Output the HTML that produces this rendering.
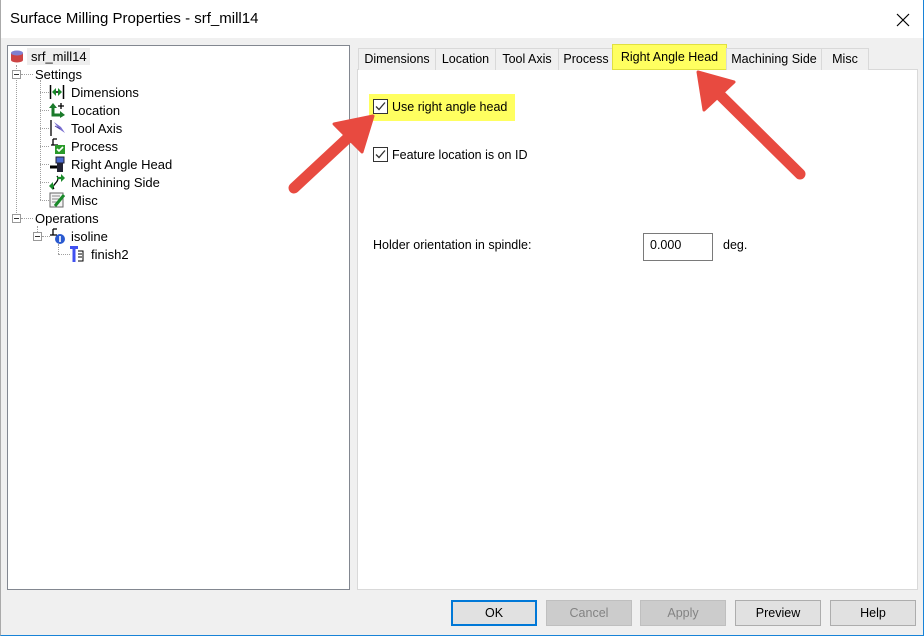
<!DOCTYPE html>
<html><head><meta charset="utf-8"><style>
*{margin:0;padding:0;box-sizing:border-box}
body{width:924px;height:636px;background:#f0f0f0;font-family:"Liberation Sans",Arial,sans-serif;font-size:12.5px;color:#000;position:relative;overflow:hidden}
.abs{position:absolute}
#win{left:0;top:0;width:924px;height:636px;border:1px solid #1883d7;border-top:none;border-left:1px solid #aaa}
#title{left:0;top:0;width:923px;height:38px;background:#fff}
#title span{position:absolute;left:10px;top:10px;font-size:15px}
#tree{left:7px;top:45px;width:343px;height:545px;background:#fff;border:1px solid #828790}
.ti{position:absolute;font-size:13px;white-space:nowrap}
#panel{left:357px;top:69px;width:561px;height:521px;background:#fff;border:1px solid #d9d9d9}
.tab{position:absolute;top:48px;height:22px;border:1px solid #d9d9d9;border-bottom:none;background:#f0f0f0;font-size:12.5px;padding:3px 0 0;text-align:center}
.btn{position:absolute;top:600px;height:26px;border:1px solid #adadad;background:#e1e1e1;text-align:center;padding-top:5px;font-size:12.5px}
.cb{position:absolute;width:15px;height:15px;border:1px solid #333;background:#fff}
.dot{position:absolute;border-color:#a0a0a0;border-style:dotted;border-width:0}
.ex{position:absolute;width:9px;height:9px;border:1px solid #999;background:#fff}
.ex::after{content:"";position:absolute;left:1px;top:3px;width:5px;height:1px;background:#333}
</style></head><body>
<div id="title" class="abs"><span>Surface Milling Properties - srf_mill14</span>
<svg class="abs" style="left:896px;top:13px" width="14" height="14"><path d="M1 1L13 13M13 1L1 13" stroke="#000" stroke-width="1.2"/></svg></div>

<div id="tree" class="abs">
<div class="abs" style="left:19px;top:2px;width:63px;height:17px;background:#eee"></div>
<svg class="abs" style="left:2px;top:3px" width="14" height="14"><rect x="1" y="4" width="12" height="7" fill="#c44"/><ellipse cx="7" cy="11" rx="6" ry="2.5" fill="#c44"/><ellipse cx="7" cy="4" rx="6" ry="2.5" fill="#8080d0"/></svg>
<div class="ti" style="left:23px;top:3px">srf_mill14</div>
<div class="dot" style="left:8px;top:19px;height:154px;border-left-width:1px"></div>
<div class="ex" style="left:4px;top:24px"></div>
<div class="dot" style="left:13px;top:28px;width:12px;border-top-width:1px"></div>
<div class="ti" style="left:27px;top:21px">Settings</div>
<div class="dot" style="left:32px;top:34px;height:120px;border-left-width:1px"></div>
<div class="dot" style="left:32px;top:46px;width:9px;border-top-width:1px"></div>
<div class="dot" style="left:32px;top:64px;width:9px;border-top-width:1px"></div>
<div class="dot" style="left:32px;top:82px;width:9px;border-top-width:1px"></div>
<div class="dot" style="left:32px;top:100px;width:9px;border-top-width:1px"></div>
<div class="dot" style="left:32px;top:118px;width:9px;border-top-width:1px"></div>
<div class="dot" style="left:32px;top:136px;width:9px;border-top-width:1px"></div>
<div class="dot" style="left:32px;top:154px;width:9px;border-top-width:1px"></div>
<svg class="abs" style="left:41px;top:38px" width="16" height="16"><path d="M1.5 1v14M14.5 1v14M4 8h8" stroke="#000" stroke-width="1.5" fill="none"/><path d="M3 8l4-4v8zM13 8l-4-4v8z" fill="#1a8a2a"/></svg>
<div class="ti" style="left:63px;top:39px">Dimensions</div>
<svg class="abs" style="left:41px;top:56px" width="16" height="16"><path d="M4 5v8h8" stroke="#1a7a2a" stroke-width="3" fill="none"/><path d="M0 6l4-5 4 5zM11 9l5 4-5 3z" fill="#1a7a2a"/><path d="M12 1v6M9 4h6" stroke="#000" stroke-width="1.3"/></svg>
<div class="ti" style="left:63px;top:57px">Location</div>
<svg class="abs" style="left:41px;top:74px" width="16" height="16"><path d="M2 0v16" stroke="#000" stroke-width="1.3"/><path d="M5 2l7 5 4 6-6-4z" fill="#7a6fd0"/><path d="M6 6l5 3" stroke="#4a3fa0"/></svg>
<div class="ti" style="left:63px;top:75px">Tool Axis</div>
<svg class="abs" style="left:41px;top:92px" width="16" height="16"><path d="M4 1h4M4 1v6M2 7h7" stroke="#000" stroke-width="1.3" fill="none"/><rect x="6" y="7" width="10" height="9" fill="#2a9a2a"/><path d="M8 11l2 2 4-4" stroke="#fff" stroke-width="1.6" fill="none"/></svg>
<div class="ti" style="left:63px;top:93px">Process</div>
<svg class="abs" style="left:41px;top:110px" width="16" height="16"><rect x="7" y="1" width="8" height="6" fill="#4a6ad0" stroke="#223"/><rect x="8" y="7" width="6" height="9" fill="#223"/><path d="M1 11h7" stroke="#000" stroke-width="3"/></svg>
<div class="ti" style="left:63px;top:111px">Right Angle Head</div>
<svg class="abs" style="left:41px;top:128px" width="16" height="16"><path d="M5 15c-4-4 7-7 3-13" stroke="#000" stroke-width="1.3" fill="none"/><path d="M8 4h5M5 12h-3" stroke="#1a8a2a" stroke-width="2.2"/><path d="M12 0l4 4-4 4zM4 8l-4 4 4 4z" fill="#1a8a2a"/></svg>
<div class="ti" style="left:63px;top:129px">Machining Side</div>
<svg class="abs" style="left:41px;top:146px" width="16" height="16"><rect x="1" y="1" width="13" height="14" fill="#f4f4f4" stroke="#666"/><path d="M3 4h8M3 7h8M3 10h5" stroke="#888"/><path d="M6 14l9-11" stroke="#1a8a2a" stroke-width="3"/></svg>
<div class="ti" style="left:63px;top:147px">Misc</div>
<div class="ex" style="left:4px;top:168px"></div>
<div class="dot" style="left:13px;top:172px;width:12px;border-top-width:1px"></div>
<div class="ti" style="left:27px;top:165px">Operations</div>
<div class="dot" style="left:29px;top:180px;height:6px;border-left-width:1px"></div>
<div class="ex" style="left:25px;top:186px"></div>
<div class="dot" style="left:34px;top:190px;width:8px;border-top-width:1px"></div>
<svg class="abs" style="left:41px;top:182px" width="16" height="16"><path d="M4 1h4M4 1v6M1 7h7" stroke="#000" stroke-width="1.3" fill="none"/><circle cx="11" cy="11" r="5" fill="#2a5ad0"/><path d="M11 8v6" stroke="#fff" stroke-width="1.6"/></svg>
<div class="ti" style="left:63px;top:183px">isoline</div>
<div class="dot" style="left:50px;top:198px;height:10px;border-left-width:1px"></div>
<div class="dot" style="left:50px;top:208px;width:12px;border-top-width:1px"></div>
<svg class="abs" style="left:62px;top:200px" width="14" height="16"><path d="M0 1.5h8M4 1v15" stroke="#4050f0" stroke-width="3"/><path d="M8 5h5v10h-5M8 8h4M8 11h4" stroke="#000" fill="none"/></svg>
<div class="ti" style="left:83px;top:201px">finish2</div>
</div>

<div id="panel" class="abs"></div>
<div class="tab" style="left:358px;width:78px">Dimensions</div>
<div class="tab" style="left:435px;width:61px">Location</div>
<div class="tab" style="left:495px;width:64px">Tool Axis</div>
<div class="tab" style="left:558px;width:56px">Process</div>
<div class="tab" style="left:612px;top:44px;height:26px;width:115px;background:#ffff60;border:1px solid #e0e040;padding-top:5px">Right Angle Head</div>
<div class="tab" style="left:726px;width:96px">Machining Side</div>
<div class="tab" style="left:821px;width:48px">Misc</div>

<div class="abs" style="left:369px;top:94px;width:146px;height:27px;background:#ffff60"></div>
<div class="cb" style="left:373px;top:99px"><svg width="13" height="13"><path d="M2 6.5l3 3 6-7" stroke="#333" stroke-width="1.3" fill="none"/></svg></div>
<div class="abs" style="left:392px;top:100px">Use right angle head</div>
<div class="cb" style="left:373px;top:147px"><svg width="13" height="13"><path d="M2 6.5l3 3 6-7" stroke="#333" stroke-width="1.3" fill="none"/></svg></div>
<div class="abs" style="left:392px;top:148px">Feature location is on ID</div>
<div class="abs" style="left:373px;top:238px">Holder orientation in spindle:</div>
<div class="abs" style="left:643px;top:233px;width:70px;height:28px;border:1px solid #7a7a7a;background:#fff;padding:4px 0 0 6px">0.000</div>
<div class="abs" style="left:723px;top:238px">deg.</div>

<svg class="abs" style="left:0;top:0" width="924" height="636">
<g fill="#e84a40" stroke="#e84a40" stroke-linecap="round" stroke-linejoin="round">
<path d="M294 188L352 134" stroke-width="11" fill="none"/>
<path d="M373 116L334 124L362 152Z" stroke-width="3"/>
<path d="M800 174L717 92" stroke-width="11" fill="none"/>
<path d="M698 72L704 110L734 82Z" stroke-width="3"/>
</g></svg>

<div class="btn" style="left:451px;width:86px;border:2px solid #0078d7;padding-top:4px">OK</div>
<div class="btn" style="left:546px;width:86px;background:#ccc;border-color:#bfbfbf;color:#838383">Cancel</div>
<div class="btn" style="left:640px;width:86px;background:#ccc;border-color:#bfbfbf;color:#838383">Apply</div>
<div class="btn" style="left:735px;width:86px">Preview</div>
<div class="btn" style="left:830px;width:86px">Help</div>
<div id="win" class="abs"></div>
</body></html>
